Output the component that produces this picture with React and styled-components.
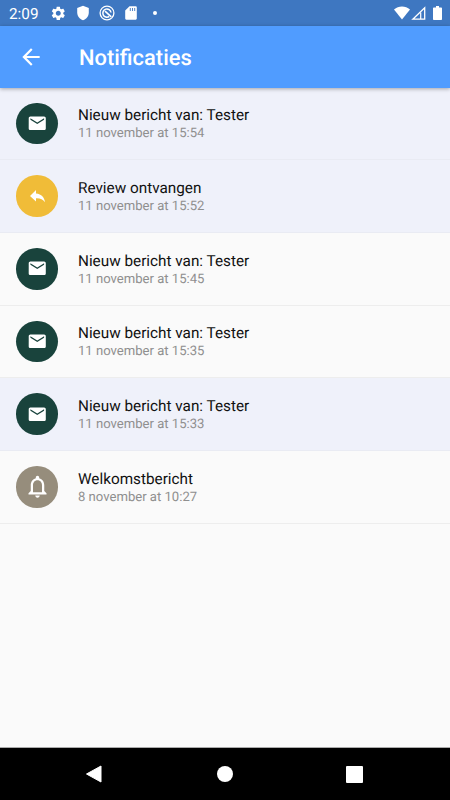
import React from "react";
import styled, { createGlobalStyle } from "styled-components";
import {
  MdSettings,
  MdArrowBack,
  MdEmail,
  MdNotificationsNone,
} from "react-icons/md";

const GlobalStyle = createGlobalStyle`
  * {
    box-sizing: border-box;
  }
  body {
    margin: 0;
    font-family: Roboto, "Liberation Sans", sans-serif;
    text-rendering: geometricPrecision;
  }
  svg {
    display: block;
    flex: none;
  }
`;

const Screen = styled.div`
  width: 450px;
  height: 800px;
  display: flex;
  flex-direction: column;
  overflow: hidden;
  background-color: #fafafa;
`;

const StatusBar = styled.div`
  flex: none;
  height: 26px;
  padding: 0 8px 0 9px;
  display: flex;
  align-items: center;
  justify-content: space-between;
  background-color: #3e77c1;
  color: #fff;
`;

const StatusGroup = styled.div`
  display: flex;
  align-items: center;
  gap: ${(props) => props.$gap}px;
`;

const Clock = styled.span`
  width: 33px;
  font-size: 15.3px;
  line-height: 26px;
  padding-top: 2px;
  white-space: nowrap;
`;

const Network = styled.div`
  display: flex;
  align-items: center;
  gap: 1px;
`;

const AppBar = styled.header`
  position: relative;
  flex: none;
  height: 61.5px;
  padding-left: 18px;
  display: flex;
  align-items: center;
  gap: 35px;
  background-color: #509cff;
  color: #fff;
  box-shadow: 0 1px 4px rgba(0, 0, 0, 0.32);
`;

const PageTitle = styled.h1`
  margin: 0;
  padding-top: 4px;
  font-size: 21.9px;
  font-weight: 500;
  line-height: 26px;
`;

const List = styled.main`
  flex: 1;
`;

const Row = styled.div`
  height: 72.7px;
  padding-left: 16.4px;
  display: flex;
  align-items: center;
  gap: 20px;
  border-bottom: 1px solid ${(props) => (props.$unread ? "#e9ebf3" : "#ededed")};
  background-color: ${(props) => (props.$unread ? "#eff1fa" : "#fafafa")};
`;

const Avatar = styled.div`
  width: 41.6px;
  height: 41.6px;
  display: flex;
  align-items: center;
  justify-content: center;
  border-radius: 50%;
  background-color: ${(props) => props.$color};
  color: #fff;
`;

const Info = styled.div`
  padding-top: 3.6px;
`;

const Subject = styled.div`
  font-size: 15.3px;
  line-height: 19px;
  color: #111;
`;

const Time = styled.div`
  font-size: 13.1px;
  line-height: 18.8px;
  color: #8f8f8f;
`;

const NavBar = styled.nav`
  flex: none;
  height: 53px;
  display: flex;
  align-items: center;
  justify-content: space-between;
  padding: 0 87px 0 85px;
  border-top: 1px solid #aaa;
  background-color: #000;
`;

const Reply = () => (
  <svg width="17" height="15" viewBox="0 0 17 15" fill="#fff">
    <path d="M7 1 1 7 7 12.5V9.3C11 9.1 14 10.2 16 13.2 15.4 8.5 12.6 4.8 7 4.4Z" />
  </svg>
);

const types = {
  message: { color: "#19433c", icon: <MdEmail size={20.5} /> },
  review: { color: "#f0bc38", icon: <Reply /> },
  welcome: { color: "#968d7c", icon: <MdNotificationsNone size={27} /> },
};

const notifications = [
  { id: 1, type: "message", title: "Nieuw bericht van: Tester", time: "11 november at 15:54", unread: true },
  { id: 2, type: "review", title: "Review ontvangen", time: "11 november at 15:52", unread: true },
  { id: 3, type: "message", title: "Nieuw bericht van: Tester", time: "11 november at 15:45", unread: false },
  { id: 4, type: "message", title: "Nieuw bericht van: Tester", time: "11 november at 15:35", unread: false },
  { id: 5, type: "message", title: "Nieuw bericht van: Tester", time: "11 november at 15:33", unread: true },
  { id: 6, type: "welcome", title: "Welkomstbericht", time: "8 november at 10:27", unread: false },
];

const Shield = () => (
  <svg width="16" height="16" viewBox="0 0 16 16" fill="#fff">
    <path d="M8 .8 13.8 3V7.5C13.8 11 11.5 14 8 15.2 4.5 14 2.2 11 2.2 7.5V3Z" />
  </svg>
);

const NoTracking = () => (
  <svg width="16" height="16" viewBox="0 0 16 16" fill="none" stroke="#fff">
    <circle cx="8" cy="8" r="6.9" strokeWidth="1.3" />
    <path d="M10.2 11.5A4.1 4.1 0 1 1 12 7.5" strokeWidth="1.5" />
    <path d="m6 6.2 6.3 5.6" strokeWidth="1.6" />
  </svg>
);

const SdCard = () => (
  <svg width="16" height="16" viewBox="0 0 16 16">
    <path d="M6.5 1.3h6.2q1.1 0 1.1 1.1v11.2q0 1.1-1.1 1.1H3.3q-1.1 0-1.1-1.1V5.5Z" fill="#fff" />
    <path d="M7.3 3v3M9.5 3v3M11.7 3v3" stroke="#3e77c1" strokeWidth="0.9" />
  </svg>
);

const Wifi = () => (
  <svg width="16" height="14" viewBox="0 0 16 14" fill="#fff">
    <path d="M0 3.5C4.5-.5 11.5-.5 16 3.5L8 13.5Z" />
  </svg>
);

const Signal = () => (
  <svg width="15" height="14" viewBox="0 0 15 14" fill="none" stroke="#fff">
    <path d="M1.8 13.2 13.7 1.8V13.2Z" strokeWidth="1.3" />
    <path d="M9.7 6.5V13" strokeWidth="1.2" />
  </svg>
);

const Battery = () => (
  <svg width="9" height="14" viewBox="0 0 9 14" fill="#fff">
    <path d="M3 0h3v1.4h2.2q.8 0 .8.8v11q0 .8-.8.8H.8q-.8 0-.8-.8v-11q0-.8.8-.8H3Z" />
  </svg>
);

const NotificationItem = ({ item }) => {
  const type = types[item.type];

  return (
    <Row $unread={item.unread}>
      <Avatar $color={type.color}>{type.icon}</Avatar>
      <Info>
        <Subject>{item.title}</Subject>
        <Time>{item.time}</Time>
      </Info>
    </Row>
  );
};

const App = () => {
  return (
    <>
      <GlobalStyle />
      <Screen>
        <StatusBar>
          <StatusGroup $gap={8}>
            <Clock>2:09</Clock>
            <MdSettings size={16.6} />
            <Shield />
            <NoTracking />
            <SdCard />
            <svg width="16" height="16" viewBox="0 0 16 16">
              <circle cx="8" cy="8" r="2" fill="#fff" />
            </svg>
          </StatusGroup>
          <StatusGroup $gap={7.5}>
            <Network>
              <Wifi />
              <Signal />
            </Network>
            <Battery />
          </StatusGroup>
        </StatusBar>
        <AppBar>
          <MdArrowBack size={26} />
          <PageTitle>Notificaties</PageTitle>
        </AppBar>
        <List>
          {notifications.map((item) => (
            <NotificationItem key={item.id} item={item} />
          ))}
        </List>
        <NavBar>
          <svg width="17" height="18" viewBox="0 0 17 18">
            <path d="M1.5 9 16 1v16Z" fill="#fff" stroke="#fff" strokeLinejoin="round" />
          </svg>
          <svg width="18" height="16" viewBox="0 0 18 16">
            <circle cx="10" cy="8" r="8" fill="#fff" />
          </svg>
          <svg width="17" height="17" viewBox="0 0 17 17">
            <rect width="17" height="17" rx="1" fill="#fff" />
          </svg>
        </NavBar>
      </Screen>
    </>
  );
};

export default App;
